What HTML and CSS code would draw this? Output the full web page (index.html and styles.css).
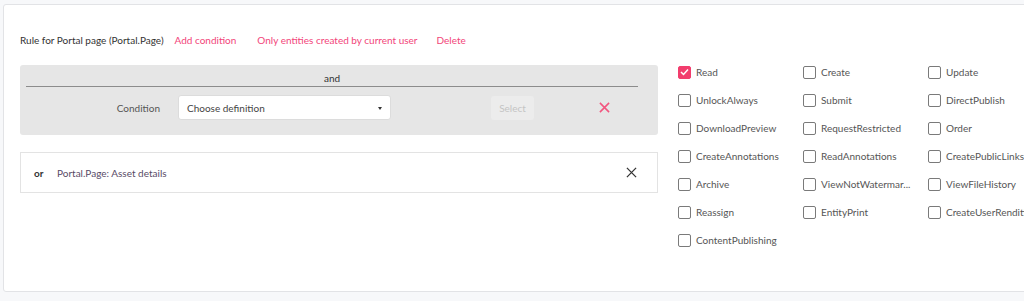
FILE: index.html
```html
<!DOCTYPE html>
<html lang="en">
<head>
    <meta charset="UTF-8">
    <title>Rule editor</title>
    <link rel="stylesheet" href="styles.css">
</head>
<body>
    <div class="card">
        <div class="rule-header">
            <span class="rule-title">Rule for Portal page (Portal.Page)</span>
            <a class="rule-link link-add">Add condition</a>
            <a class="rule-link link-only">Only entities created by current user</a>
            <a class="rule-link">Delete</a>
        </div>
        <div class="rule-body">
            <div class="conditions">
                <div class="and-box">
                    <div class="and-title">and</div>
                    <div class="condition-row">
                        <span class="condition-label">Condition</span>
                        <div class="definition-select">
                            <span>Choose definition</span>
                            <span class="caret"></span>
                        </div>
                        <button class="select-btn" disabled>Select</button>
                        <svg class="remove-x" width="11" height="11" viewBox="0 0 12 12">
                            <path d="M1 1 L11 11 M11 1 L1 11" stroke="#f2557f" stroke-width="1.7" fill="none"/>
                        </svg>
                    </div>
                </div>
                <div class="or-box">
                    <span class="or-label">or</span>
                    <span class="or-text">Portal.Page: Asset details</span>
                    <svg class="close-x" width="11" height="11" viewBox="0 0 12 12">
                        <path d="M1 1 L11 11 M11 1 L1 11" stroke="#333" stroke-width="1.4" fill="none"/>
                    </svg>
                </div>
            </div>
            <div class="permissions">
                <label class="perm"><span class="box checked"><svg width="9" height="8" viewBox="0 0 9 8"><path d="M1 4 L3.5 6.5 L8 1.5" stroke="#fff" stroke-width="1.5" fill="none"/></svg></span><span class="perm-name">Read</span></label>
                <label class="perm"><span class="box"></span><span class="perm-name">Create</span></label>
                <label class="perm"><span class="box"></span><span class="perm-name">Update</span></label>
                <label class="perm"><span class="box"></span><span class="perm-name">UnlockAlways</span></label>
                <label class="perm"><span class="box"></span><span class="perm-name">Submit</span></label>
                <label class="perm"><span class="box"></span><span class="perm-name">DirectPublish</span></label>
                <label class="perm"><span class="box"></span><span class="perm-name">DownloadPreview</span></label>
                <label class="perm"><span class="box"></span><span class="perm-name">RequestRestricted</span></label>
                <label class="perm"><span class="box"></span><span class="perm-name">Order</span></label>
                <label class="perm"><span class="box"></span><span class="perm-name">CreateAnnotations</span></label>
                <label class="perm"><span class="box"></span><span class="perm-name">ReadAnnotations</span></label>
                <label class="perm"><span class="box"></span><span class="perm-name">CreatePublicLinks</span></label>
                <label class="perm"><span class="box"></span><span class="perm-name">Archive</span></label>
                <label class="perm"><span class="box"></span><span class="perm-name" title="ViewNotWatermarked">ViewNotWatermar...</span></label>
                <label class="perm"><span class="box"></span><span class="perm-name">ViewFileHistory</span></label>
                <label class="perm"><span class="box"></span><span class="perm-name">Reassign</span></label>
                <label class="perm"><span class="box"></span><span class="perm-name">EntityPrint</span></label>
                <label class="perm"><span class="box"></span><span class="perm-name">CreateUserRenditions</span></label>
                <label class="perm"><span class="box"></span><span class="perm-name">ContentPublishing</span></label>
            </div>
        </div>
    </div>
</body>
</html>
```

FILE: styles.css
```css
body {
    margin: 0;
    background: #f7f8fa;
    overflow: hidden;
    font-family: Lato, "Open Sans", sans-serif;
    font-size: 10px;
    color: #333;
}
.card {
    margin: 4px 0 0 3px;
    width: 1060px;
    height: 288px;
    box-sizing: border-box;
    background: #fff;
    border: 1px solid #e2e3e6;
    border-radius: 3px;
    padding: 27px 16px 0 16px;
}
.rule-header {
    display: flex;
    align-items: center;
    height: 16px;
    line-height: 16px;
    margin-bottom: 17px;
}
.rule-title {
    color: #333;
    margin-right: 11px;
}
.rule-link {
    color: #f2457a;
    cursor: pointer;
}
.link-add {
    margin-right: 21px;
}
.link-only {
    margin-right: 19px;
}
.rule-body {
    display: flex;
    gap: 20px;
}
.conditions {
    flex: none;
    width: 638px;
    display: flex;
    flex-direction: column;
    gap: 17px;
}
.and-box {
    background: #e6e6e6;
    border-radius: 3px;
    height: 70px;
    box-sizing: border-box;
    padding: 5px 20px 0 6px;
}
.and-title {
    text-align: center;
    line-height: 16px;
    border-bottom: 1px solid #8c8c8c;
    color: #333;
}
.condition-row {
    display: flex;
    align-items: center;
    margin-top: 8px;
    height: 25px;
}
.condition-label {
    width: 134px;
    text-align: right;
    color: #555;
}
.definition-select {
    margin-left: 18px;
    width: 213px;
    height: 25px;
    box-sizing: border-box;
    background: #fff;
    border: 1px solid #dcdcdc;
    border-radius: 3px;
    display: flex;
    align-items: center;
    justify-content: space-between;
    padding: 0 8px 0 8px;
    color: #444;
}
.caret {
    width: 0;
    height: 0;
    border-left: 2.5px solid transparent;
    border-right: 2.5px solid transparent;
    border-top: 3px solid #333;
    margin-top: 2px;
}
.select-btn {
    margin-left: 100px;
    width: 43px;
    height: 24px;
    border: none;
    border-radius: 3px;
    background: #ececec;
    color: #c4c4c4;
    font-family: inherit;
    font-size: 10px;
    padding: 0;
}
.remove-x {
    margin-left: 65px;
}
.or-box {
    height: 41px;
    box-sizing: border-box;
    border: 1px solid #e3e3e3;
    display: flex;
    align-items: center;
    padding: 0 20px 0 13px;
}
.or-label {
    font-weight: 700;
    width: 23px;
    color: #333;
}
.or-text {
    flex: 1;
    color: #584a66;
}
.permissions {
    display: grid;
    grid-template-columns: repeat(3, 125px);
    row-gap: 14px;
}
.perm {
    display: flex;
    align-items: center;
    gap: 5px;
    height: 14px;
    color: #555;
}
.box {
    flex: none;
    width: 13px;
    height: 13px;
    box-sizing: border-box;
    border: 1.5px solid #7a7a7a;
    border-radius: 2px;
    display: flex;
    align-items: center;
    justify-content: center;
}
.box.checked {
    background: #f23d6d;
    border-color: #f23d6d;
}
.perm-name {
    white-space: nowrap;
}
```
